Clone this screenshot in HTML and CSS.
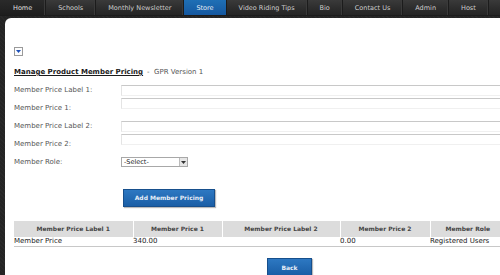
FILE: index.html
```html
<!DOCTYPE html>
<html lang="en">
<head>
    <meta charset="UTF-8">
    <title>Manage Product Member Pricing</title>
    <link rel="stylesheet" href="styles.css">
</head>
<body>
    <!-- top menu -->
    <nav class="topnav">
        <a href="#" class="active">Home</a>
        <a href="#">Schools</a>
        <a href="#">Monthly Newsletter</a>
        <a href="#" class="selected">Store</a>
        <a href="#">Video Riding Tips</a>
        <a href="#">Bio</a>
        <a href="#">Contact Us</a>
        <a href="#">Admin</a>
        <a href="#">Host</a>
        <a href="#">Logout</a>
    </nav>

    <!-- main panel -->
    <div class="panel">
        <div class="toggle">
            <svg width="5" height="3" viewBox="0 0 5 3"><path d="M0 0h5L2.5 3z" fill="#1c4fb8"/></svg>
        </div>

        <h2 class="title"><span class="title-main">Manage Product Member Pricing</span><span class="title-sub">- &nbsp;GPR Version 1</span></h2>

        <div class="form-grid">
            <label>Member Price Label 1:</label>
            <input type="text" class="field">
            <label>Member Price 1:</label>
            <input type="text" class="field top">
            <label>Member Price Label 2:</label>
            <input type="text" class="field">
            <label>Member Price 2:</label>
            <input type="text" class="field top">
            <label>Member Role:</label>
            <div class="select">
                <span>-Select-</span>
                <span class="select-arrow"><svg width="5" height="3" viewBox="0 0 5 3"><path d="M0 0h5L2.5 3z" fill="#333"/></svg></span>
            </div>
        </div>

        <div class="actions">
            <button class="btn btn-add">Add Member Pricing</button>
        </div>

        <table class="pricing">
            <thead>
                <tr>
                    <th class="c1">Member Price Label 1</th>
                    <th class="c2">Member Price 1</th>
                    <th class="c3">Member Price Label 2</th>
                    <th class="c4">Member Price 2</th>
                    <th>Member Role</th>
                </tr>
            </thead>
            <tbody>
                <tr>
                    <td>Member Price</td>
                    <td>340.00</td>
                    <td></td>
                    <td>0.00</td>
                    <td>Registered Users</td>
                </tr>
            </tbody>
        </table>

        <div class="back-row">
            <button class="btn btn-back">Back</button>
        </div>
    </div>
</body>
</html>
```

FILE: styles.css
```css
* {
    margin: 0;
    padding: 0;
    box-sizing: border-box;
}

body {
    width: 500px;
    height: 275px;
    overflow: hidden;
    font-family: "DejaVu Sans", Verdana, sans-serif;
    background: #262626 repeating-linear-gradient(45deg, #292929 0 1px, #242424 1px 3px);
    color: #333;
}

/* top menu */
.topnav {
    display: flex;
    height: 16px;
    width: 560px;
    background: linear-gradient(#3a3a3a, #2c2c2c 60%, #252525);
    border-bottom: 1px solid #1c1c1c;
}

.topnav a {
    display: flex;
    align-items: center;
    padding: 0 12px;
    font-size: 6.5px;
    color: #cfcfcf;
    text-decoration: none;
    white-space: nowrap;
    border-right: 1px solid #1c1c1c;
    box-shadow: inset -1px 0 0 #3a3a3a;
}

.topnav a.active {
    padding: 0 13px;
    background: linear-gradient(#2a2a2a, #1e1e1e);
    color: #e0e0e0;
}

.topnav a.selected {
    background: linear-gradient(#1f6fb5, #1558a0);
    color: #e8eef6;
    box-shadow: none;
}

/* white panel */
.panel {
    width: 569px;
    margin: 2px 0 0 5px;
    height: 260px;
    background: #fff;
    border-top-left-radius: 6px;
    padding: 29px 9px 0 9px;
}

.toggle {
    width: 9px;
    height: 9px;
    border: 1px solid #9a9a9a;
    background: #fdfdfd;
    display: flex;
    align-items: center;
    justify-content: center;
}

.title {
    margin-top: 11px;
    height: 10px;
    line-height: 10px;
    font-size: 7px;
    font-weight: normal;
    white-space: nowrap;
}

.title-main {
    font-weight: bold;
    color: #1a1a1a;
    text-decoration: underline;
}

.title-sub {
    margin-left: 4px;
    color: #555;
}

/* form */
.form-grid {
    display: grid;
    grid-template-columns: 107px 1fr;
    grid-template-rows: 14px 22px 14px 22px 14px;
    align-items: center;
    margin-top: 6px;
}

.form-grid label {
    font-size: 7px;
    color: #555;
    white-space: nowrap;
}

.field {
    width: 430px;
    height: 11px;
    border: 1px solid #e4e4e4;
    border-top-color: #c8c8c8;
    border-bottom-color: #f0f0f0;
    background: #fff;
}

.field.top {
    align-self: start;
    margin-top: 1px;
}

.select {
    width: 67px;
    height: 10px;
    border: 1px solid #a8a8a8;
    display: flex;
    align-items: center;
    justify-content: space-between;
    font-size: 6.5px;
    color: #222;
    padding-left: 2px;
}

.select-arrow {
    width: 8px;
    height: 8px;
    background: #e6e6e6;
    border-left: 1px solid #bbb;
    display: flex;
    align-items: center;
    justify-content: center;
}

/* buttons */
.actions {
    margin-top: 16px;
    padding-left: 109px;
}

.btn {
    font-family: "DejaVu Sans", Verdana, sans-serif;
    font-size: 6px;
    font-weight: bold;
    color: #e6eef8;
    background: linear-gradient(#2d78c2, #1a5ea6);
    border: 1px solid #174f8c;
    box-shadow: 1px 1px 1px #bbb;
    height: 18px;
}

.btn-add {
    width: 92px;
}

.btn-back {
    width: 45px;
}

/* table */
.pricing {
    margin-top: 14px;
    width: 492px;
    border-collapse: collapse;
    font-size: 7px;
}

.pricing th {
    height: 16px;
    background: #dcdcdc;
    font-size: 6px;
    color: #444;
    border-right: 1px solid #fff;
    text-align: center;
}

.pricing th.c1 { width: 119px; }
.pricing th.c2 { width: 89px; }
.pricing th.c3 { width: 118px; }
.pricing th.c4 { width: 90px; }

.pricing td {
    height: 10px;
    line-height: 9px;
    color: #222;
    text-align: left;
    border-bottom: 1px solid #c8c8c8;
    white-space: nowrap;
}

.back-row {
    margin-top: 11px;
    display: flex;
    justify-content: center;
}
```
